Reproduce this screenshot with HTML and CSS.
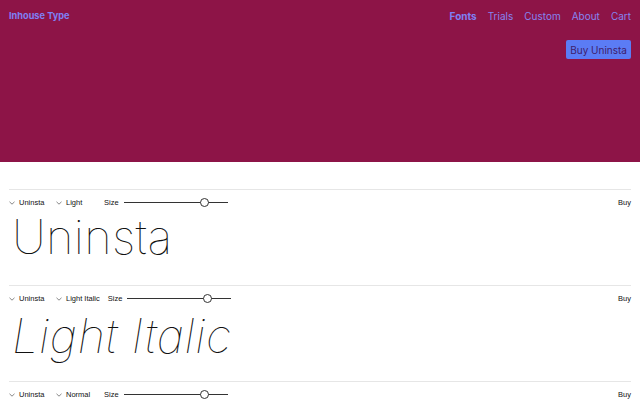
FILE: index.html
```html
<!DOCTYPE html>
<html lang="en">
<head>
<meta charset="utf-8">
<title>Uninsta — Inhouse Type</title>
<link rel="stylesheet" href="styles.css">
</head>
<body>
<header class="hero">
  <div class="topbar">
    <a class="logo" href="#">Inhouse Type</a>
    <nav class="nav">
      <a class="nav-link active" href="#">Fonts</a>
      <a class="nav-link" href="#">Trials</a>
      <a class="nav-link" href="#">Custom</a>
      <a class="nav-link" href="#">About</a>
      <a class="nav-link" href="#">Cart</a>
    </nav>
  </div>
  <div class="hero-actions">
    <button class="buy-btn">Buy Uninsta</button>
  </div>
</header>
<main class="specimens">
  <section class="row">
    <div class="controls">
      <span class="select family"><svg class="chev" viewBox="0 0 6 4"><path d="M0.5 0.8 L3 3.2 L5.5 0.8"/></svg>Uninsta</span>
      <span class="select style"><svg class="chev" viewBox="0 0 6 4"><path d="M0.5 0.8 L3 3.2 L5.5 0.8"/></svg>Light</span>
      <span class="size-label">Size</span>
      <span class="slider"><span class="thumb"></span></span>
      <span class="buy">Buy</span>
    </div>
    <div class="sample">Uninsta</div>
  </section>
  <section class="row">
    <div class="controls">
      <span class="select family"><svg class="chev" viewBox="0 0 6 4"><path d="M0.5 0.8 L3 3.2 L5.5 0.8"/></svg>Uninsta</span>
      <span class="select style"><svg class="chev" viewBox="0 0 6 4"><path d="M0.5 0.8 L3 3.2 L5.5 0.8"/></svg>Light Italic</span>
      <span class="size-label">Size</span>
      <span class="slider"><span class="thumb"></span></span>
      <span class="buy">Buy</span>
    </div>
    <div class="sample italic">Light Italic</div>
  </section>
  <section class="row">
    <div class="controls">
      <span class="select family"><svg class="chev" viewBox="0 0 6 4"><path d="M0.5 0.8 L3 3.2 L5.5 0.8"/></svg>Uninsta</span>
      <span class="select style"><svg class="chev" viewBox="0 0 6 4"><path d="M0.5 0.8 L3 3.2 L5.5 0.8"/></svg>Normal</span>
      <span class="size-label">Size</span>
      <span class="slider"><span class="thumb"></span></span>
      <span class="buy">Buy</span>
    </div>
    <div class="sample normal">Normal</div>
  </section>
</main>
</body>
</html>
```
FILE: styles.css
```css
* { box-sizing: border-box; }
html, body { margin: 0; padding: 0; }
body {
  font-family: "Inter", "Noto Sans", sans-serif;
  background: #ffffff;
  color: #111111;
  width: 640px;
  overflow: hidden;
}
.hero {
  background: #8d1447;
  height: 162px;
  padding: 0 9px;
}
.topbar {
  display: flex;
  justify-content: space-between;
  align-items: center;
  height: 31px;
}
.logo {
  color: #7f80f4;
  font-weight: 700;
  font-size: 9.2px;
  text-decoration: none;
}
.nav {
  display: flex;
  gap: 11px;
}
.nav-link {
  color: #8584f0;
  font-size: 10px;
  text-decoration: none;
}
.nav-link.active {
  font-weight: 700;
  color: #7f80f4;
}
.hero-actions {
  display: flex;
  justify-content: flex-end;
  margin-top: 9px;
}
.buy-btn {
  font-family: inherit;
  background: #5b7cf5;
  color: #3f1d6c;
  font-size: 10px;
  border: none;
  border-radius: 2px;
  height: 19px;
  padding: 0 4px;
  cursor: pointer;
}
.specimens {
  padding: 27px 9px 0;
}
.row {
  border-top: 1px solid #e6e6e6;
  height: 96px;
}
.controls {
  display: flex;
  align-items: center;
  height: 25px;
  font-family: "Liberation Sans", Arial, sans-serif;
  font-size: 7.5px;
  color: #111;
}
.select {
  display: flex;
  align-items: center;
  gap: 4px;
}
.family { width: 47px; }
.style { min-width: 48px; padding-right: 8px; }
.chev {
  width: 6px;
  height: 4px;
  fill: none;
  stroke: #555;
  stroke-width: 0.7;
}
.size-label { margin-right: 5px; }
.slider {
  position: relative;
  width: 104px;
  height: 1px;
  background: #333;
}
.thumb {
  position: absolute;
  left: 76px;
  top: -4px;
  width: 9px;
  height: 9px;
  border-radius: 50%;
  background: #fff;
  border: 1px solid #333;
}
.buy { margin-left: auto; }
.sample {
  font-size: 47px;
  font-weight: 100;
  line-height: 1;
  padding-left: 3px;
  margin-top: -2px;
  letter-spacing: 0.3px;
  color: #111;
  white-space: nowrap;
}
.italic { font-style: italic; margin-top: 1px; letter-spacing: 0.6px; }
```
